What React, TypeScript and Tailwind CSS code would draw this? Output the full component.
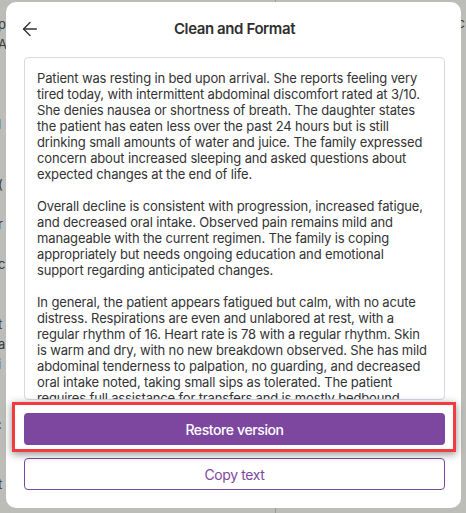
import { ArrowLeft } from "lucide-react";

const paragraphs = [
  "Patient was resting in bed upon arrival. She reports feeling very tired today, with intermittent abdominal discomfort rated at 3/10. She denies nausea or shortness of breath. The daughter states the patient has eaten less over the past 24 hours but is still drinking small amounts of water and juice. The family expressed concern about increased sleeping and asked questions about expected changes at the end of life.",
  "Overall decline is consistent with progression, increased fatigue, and decreased oral intake. Observed pain remains mild and manageable with the current regimen. The family is coping appropriately but needs ongoing education and emotional support regarding anticipated changes.",
  "In general, the patient appears fatigued but calm, with no acute distress. Respirations are even and unlabored at rest, with a regular rhythm of 16. Heart rate is 78 with a regular rhythm. Skin is warm and dry, with no new breakdown observed. She has mild abdominal tenderness to palpation, no guarding, and decreased oral intake noted, taking small sips as tolerated. The patient requires full assistance for transfers and is mostly bedbound.",
];

// page behind the dialog, only the edges show through
const behindLines = ["p", "A", "", "", "", "l", "", "", "(", "", "r", "", "c", "", "", "t", "a", "i", "", "", ":", "", "", "t"];

export default function App() {
  return (
    <div className="relative w-[466px] h-[513px] overflow-hidden bg-[#bcbdb8] font-['Inter','Liberation_Sans',sans-serif]">
      {/* dimmed page */}
      <div className="flex h-full">
        <div className="w-[277px] flex flex-col pt-[14px] -ml-[2px] text-[13px] leading-[20px] text-[#3a3a38]">
          {behindLines.map((l, i) => (
            <div key={i} className="h-[20px]">
              {l}
            </div>
          ))}
        </div>
        <div className="w-px h-full bg-[#9a9b97]" />
        <div className="flex-1 flex justify-end pt-[14px] pr-[1px] text-[13px] text-[#3a3a38]">c</div>
      </div>

      {/* dialog */}
      <div className="absolute left-[6px] top-[2px] w-[455px] h-[506px] bg-white rounded-[10px] flex flex-col pl-[18px] pr-[16px]">
        <div className="relative h-[55px] flex items-center justify-center">
          <ArrowLeft size={22} strokeWidth={1.5} className="absolute -left-[5px] top-[16px] text-[#333]" />
          <div className="text-[15px] font-semibold text-[#2f2f2f] tracking-[-0.4px] pb-[1px]">Clean and Format</div>
        </div>

        <div className="h-[343px] overflow-hidden border border-[#d9d9e3] rounded-[4px] px-[12px] pt-[12px] text-[13px] leading-[16px] tracking-[-0.15px] text-[#333]">
          {paragraphs.map((p, i) => (
            <p key={i} className="mb-4">
              {p}
            </p>
          ))}
        </div>

        <div className="relative mt-[13px]">
          <button className="w-full h-[32px] rounded-[4px] bg-[#7d47a0] text-white text-[14px] font-medium tracking-[-0.4px]">
            Restore version
          </button>
          <div className="absolute -left-[12px] -right-[11px] -top-[11px] -bottom-[7px] border-[3px] border-[#f23b40] shadow-[0_2px_8px_rgba(0,0,0,0.45)]" />
        </div>

        <button className="mt-[13px] w-full h-[32px] rounded-[4px] border border-[#7d47a0] bg-white text-[#7d47a0] text-[14px] tracking-[-0.4px]">
          Copy text
        </button>
      </div>
    </div>
  );
}
